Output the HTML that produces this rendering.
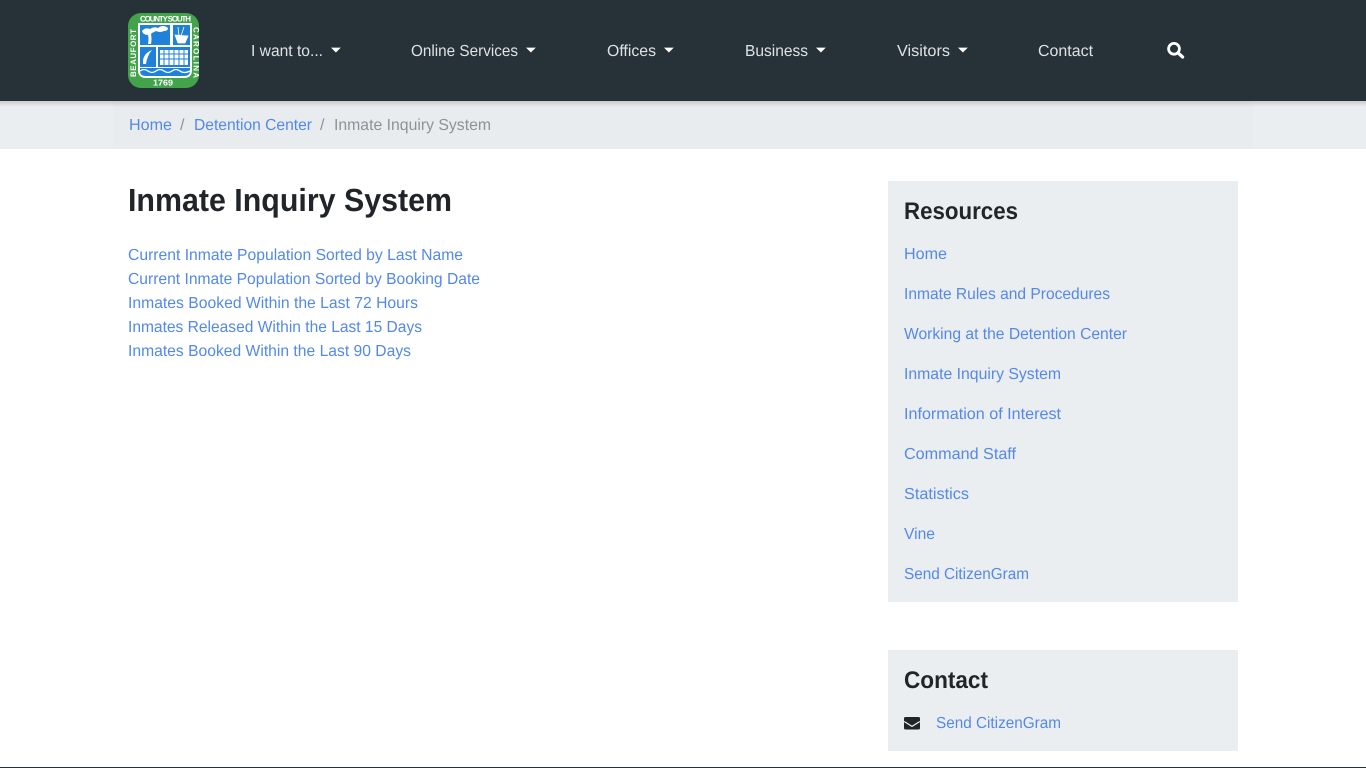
<!DOCTYPE html>
<html lang="en">
<head>
<meta charset="utf-8">
<title>Inmate Inquiry System</title>
<style>
html,body{margin:0;padding:0;background:#fff;width:1366px;height:768px;overflow:hidden}
svg{display:block;position:absolute;left:0;top:0}
text{font-family:"Liberation Sans",Arial,sans-serif;font-size:16px;text-rendering:geometricPrecision}
.n{fill:#dde2e4}
.l{fill:#5489e8}
.h{font-weight:700;fill:#212529}
.s{font-size:8px;font-weight:700;fill:#fff}
</style>
</head>
<body>
<svg width="1366" height="768" viewBox="0 0 1366 768" xmlns="http://www.w3.org/2000/svg">
<defs>
<linearGradient id="sh" x1="0" y1="0" x2="0" y2="1"><stop offset="0" stop-color="#000" stop-opacity=".14"/><stop offset="1" stop-color="#000" stop-opacity="0"/></linearGradient>
</defs>
<rect width="1366" height="768" fill="#fff"/>
<!-- breadcrumb band -->
<rect y="101" width="1366" height="48" fill="#ebeef1"/>
<rect x="113" y="101" width="1140" height="48" fill="#e9ecef"/>
<rect y="101" width="1366" height="6" fill="url(#sh)"/>
<!-- navbar -->
<rect width="1366" height="101" fill="#263238"/>
<!-- logo -->
<rect x="128" y="13" width="71" height="75" rx="13" fill="#43a34b"/>
<path d="M138 23H192V70Q192 78 184 78H146Q138 78 138 70Z" fill="#fff"/>
<rect x="140" y="25" width="30" height="20" fill="#1f82d8"/>
<rect x="173" y="25" width="17" height="20" fill="#1f82d8"/>
<rect x="140" y="47" width="16" height="20" fill="#1f82d8"/>
<rect x="158" y="47" width="32" height="20" fill="#1f82d8"/>
<path d="M140 68H190V71Q190 76 184 76H146Q140 76 140 71Z" fill="#1f82d8"/>
<path d="M142 31Q145 27 150 29Q154 26 158 28Q163 24 168 28Q168 31 164 31Q160 33 156 31L152 33L151 34Q152 39 151 44L148 44Q149 39 148 35Q143 35 142 31Z" fill="#fff"/>
<path d="M175 35L188 36L185 43L178 43Z M178 27L179 36 M184 27L181 36" fill="#fff" stroke="#fff" stroke-width=".8"/>
<path d="M143 64Q142 54 152 50Q147 56 146 64Z" fill="#fff"/>
<rect x="160" y="50" width="28" height="15" fill="#fff"/>
<path d="M160 54H188M160 59H188M164 50V65M169 50V65M174 50V65M179 50V65M184 50V65" stroke="#1f82d8" stroke-width="1"/>
<path d="M140 71Q144 68 148 71T156 71T164 71T172 71T180 71T190 71" stroke="#fff" fill="none" stroke-width="1.3"/>
<text x="153" y="85.5" style="font-size:8.5px;font-weight:700;fill:#fff" textLength="20" lengthAdjust="spacingAndGlyphs">1769</text>
<text class="s" transform="translate(136,77) rotate(-90)" textLength="48" lengthAdjust="spacing">BEAUFORT</text>
<text class="s" x="140" y="21.5" textLength="51" lengthAdjust="spacing">COUNTY SOUTH</text>
<text class="s" transform="translate(193.5,27) rotate(90)" textLength="51" lengthAdjust="spacing">CAROLINA</text>
<!-- nav -->
<text class="n" x="251" y="56" textLength="72" lengthAdjust="spacingAndGlyphs">I want to...</text>
<path d="M331 47.6h9.8l-4.9 4.9z" fill="#fff"/>
<text class="n" x="411" y="56" textLength="107" lengthAdjust="spacingAndGlyphs">Online Services</text>
<path d="M526 47.6h9.8l-4.9 4.9z" fill="#fff"/>
<text class="n" x="607" y="56" textLength="49" lengthAdjust="spacingAndGlyphs">Offices</text>
<path d="M664 47.6h9.8l-4.9 4.9z" fill="#fff"/>
<text class="n" x="745" y="56" textLength="63" lengthAdjust="spacingAndGlyphs">Business</text>
<path d="M816 47.6h9.8l-4.9 4.9z" fill="#fff"/>
<text class="n" x="897" y="56" textLength="53" lengthAdjust="spacingAndGlyphs">Visitors</text>
<path d="M958 47.6h9.8l-4.9 4.9z" fill="#fff"/>
<text class="n" x="1038" y="56" textLength="55" lengthAdjust="spacingAndGlyphs">Contact</text>
<circle cx="1174" cy="48.8" r="5.4" fill="none" stroke="#fff" stroke-width="2.8"/>
<path d="M1178.5 53.3L1182.6 57" stroke="#fff" stroke-width="3.2" stroke-linecap="round"/>
<!-- breadcrumb -->
<text class="l" x="129" y="130" textLength="43" lengthAdjust="spacingAndGlyphs">Home</text>
<text x="180" y="130" style="fill:#8c9399">/</text>
<text class="l" x="194" y="130" textLength="118" lengthAdjust="spacingAndGlyphs">Detention Center</text>
<text x="320" y="130" style="fill:#8c9399">/</text>
<text x="334" y="130" style="fill:#8c9399" textLength="157" lengthAdjust="spacingAndGlyphs">Inmate Inquiry System</text>
<!-- main -->
<text class="h" x="128" y="211" style="font-size:32px" textLength="324" lengthAdjust="spacingAndGlyphs">Inmate Inquiry System</text>
<text class="l" x="128" y="260" textLength="335" lengthAdjust="spacingAndGlyphs">Current Inmate Population Sorted by Last Name</text>
<text class="l" x="128" y="284" textLength="352" lengthAdjust="spacingAndGlyphs">Current Inmate Population Sorted by Booking Date</text>
<text class="l" x="128" y="308" textLength="290" lengthAdjust="spacingAndGlyphs">Inmates Booked Within the Last 72 Hours</text>
<text class="l" x="128" y="332" textLength="294" lengthAdjust="spacingAndGlyphs">Inmates Released Within the Last 15 Days</text>
<text class="l" x="128" y="356" textLength="283" lengthAdjust="spacingAndGlyphs">Inmates Booked Within the Last 90 Days</text>
<!-- sidebar -->
<rect x="888" y="181" width="350" height="421" fill="#ebeef1"/>
<text class="h" x="904" y="219" style="font-size:24px" textLength="114" lengthAdjust="spacingAndGlyphs">Resources</text>
<text class="l" x="904" y="259" textLength="43" lengthAdjust="spacingAndGlyphs">Home</text>
<text class="l" x="904" y="299" textLength="206" lengthAdjust="spacingAndGlyphs">Inmate Rules and Procedures</text>
<text class="l" x="904" y="339" textLength="223" lengthAdjust="spacingAndGlyphs">Working at the Detention Center</text>
<text class="l" x="904" y="379" textLength="157" lengthAdjust="spacingAndGlyphs">Inmate Inquiry System</text>
<text class="l" x="904" y="419" textLength="157" lengthAdjust="spacingAndGlyphs">Information of Interest</text>
<text class="l" x="904" y="459" textLength="112" lengthAdjust="spacingAndGlyphs">Command Staff</text>
<text class="l" x="904" y="499" textLength="65" lengthAdjust="spacingAndGlyphs">Statistics</text>
<text class="l" x="904" y="539" textLength="31" lengthAdjust="spacingAndGlyphs">Vine</text>
<text class="l" x="904" y="579" textLength="125" lengthAdjust="spacingAndGlyphs">Send CitizenGram</text>
<rect x="888" y="650" width="350" height="101" fill="#ebeef1"/>
<text class="h" x="904" y="688" style="font-size:24px" textLength="84" lengthAdjust="spacingAndGlyphs">Contact</text>
<rect x="904" y="717" width="16" height="12.5" rx="1.5" fill="#212529"/>
<path d="M904.2 721.5L912 726.4L919.8 721.5" fill="none" stroke="#ebeef1" stroke-width="1.3"/>
<text class="l" x="936" y="728" textLength="125" lengthAdjust="spacingAndGlyphs">Send CitizenGram</text>
<!-- footer line -->
<rect y="767" width="1366" height="1" fill="#263238"/>
</svg>
</body>
</html>
